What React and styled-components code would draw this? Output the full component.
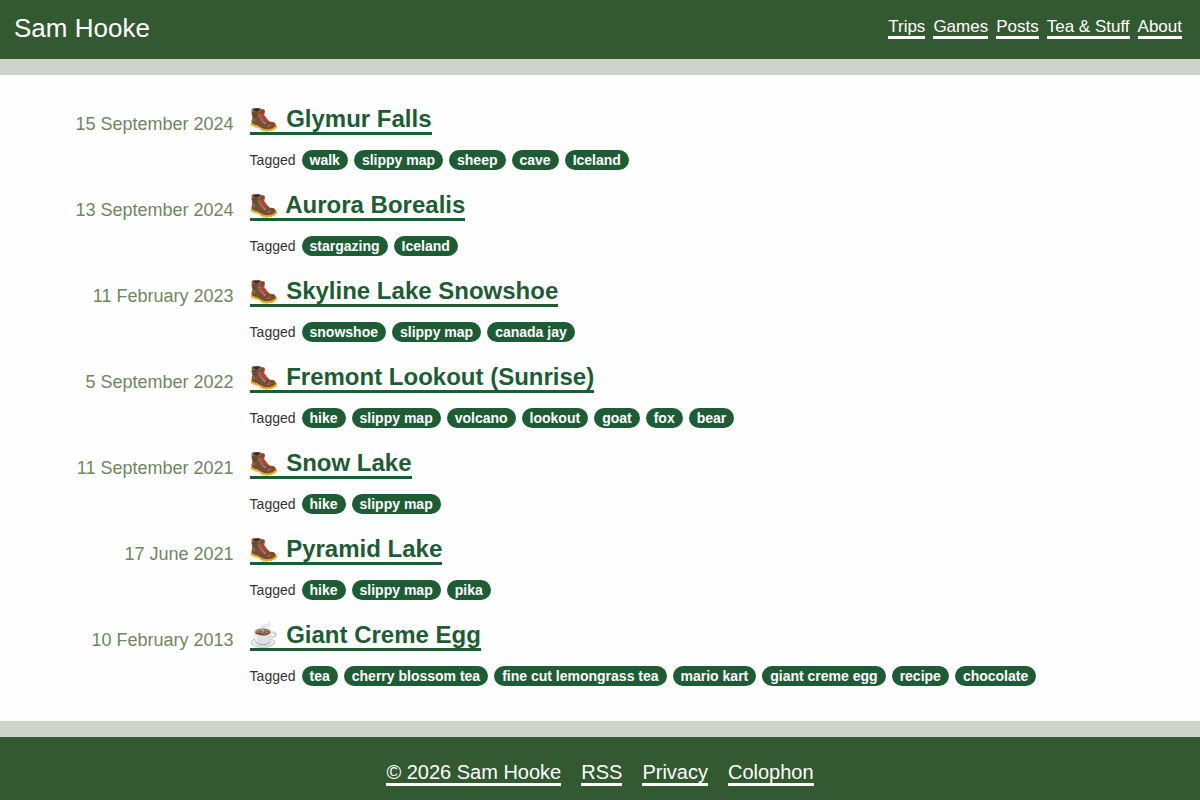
import React from "react";
import styled, { createGlobalStyle, css } from "styled-components";

const GlobalStyle = createGlobalStyle`
  *, *::before, *::after { box-sizing: border-box; }
  body {
    margin: 0;
    background: #fefefe;
    color: #333;
    font-family: "Liberation Sans", Arial, "Noto Color Emoji", sans-serif;
  }
`;

const Page = styled.div`
  display: flex;
  flex-direction: column;
  min-height: 100vh;
`;

const Header = styled.header`
  display: flex;
  align-items: flex-start;
  justify-content: space-between;
  padding: 13px 18px 16px 14px;
  background: #335930;
  border-bottom: 16px solid #ced4c8;
  background-clip: padding-box;
`;

const Brand = styled.a`
  color: #fff;
  font-size: 26px;
  line-height: 30px;
  text-decoration: none;
`;

const Nav = styled.nav`
  display: flex;
  gap: 8px;
  padding-top: 4px;
`;

const underlined = css`
  color: #fff;
  text-decoration: none;
  border-bottom: 3px solid #fff;
`;

const NavLink = styled.a`
  ${underlined}
  font-size: 17px;
  line-height: 19px;
`;

const Main = styled.main`
  flex: 1;
  padding: 30px 16px 35px;
`;

const PostList = styled.ul`
  display: flex;
  flex-direction: column;
  gap: 21px;
  margin: 0;
  padding: 0;
  list-style: none;
`;

const PostRow = styled.li`
  display: grid;
  grid-template-columns: 20% 80%;
`;

const PostDate = styled.time`
  padding: 8px 16px 0 0;
  color: #6f8760;
  font-size: 18px;
  line-height: 22px;
  text-align: right;
`;

const PostTitle = styled.h2`
  display: flex;
  margin: 0 0 15px;
  font-size: 24px;
  line-height: 27px;
`;

const TitleLink = styled.a`
  color: #1e5c36;
  text-decoration: none;
  border-bottom: 3px solid #1e5c36;
`;

const Tags = styled.div`
  display: flex;
  flex-wrap: wrap;
  gap: 6px;
  font-size: 14px;
  line-height: 20px;
`;

const Tag = styled.a`
  padding: 0 8px;
  border-radius: 10px;
  background: #1e5c36;
  color: #fff;
  font-weight: bold;
  text-decoration: none;
`;

const Footer = styled.footer`
  display: flex;
  flex-wrap: wrap;
  justify-content: center;
  gap: 20px;
  padding: 24px 16px 14px;
  background: #335930;
  border-top: 16px solid #ced4c8;
  background-clip: padding-box;
`;

const FooterLink = styled.a`
  ${underlined}
  font-size: 20px;
  line-height: 22px;
`;

const navItems = ["Trips", "Games", "Posts", "Tea & Stuff", "About"];
const footerItems = ["© 2026 Sam Hooke", "RSS", "Privacy", "Colophon"];

const posts = [
  { date: "15 September 2024", iso: "2024-09-15", icon: "🥾", title: "Glymur Falls", tags: ["walk", "slippy map", "sheep", "cave", "Iceland"] },
  { date: "13 September 2024", iso: "2024-09-13", icon: "🥾", title: "Aurora Borealis", tags: ["stargazing", "Iceland"] },
  { date: "11 February 2023", iso: "2023-02-11", icon: "🥾", title: "Skyline Lake Snowshoe", tags: ["snowshoe", "slippy map", "canada jay"] },
  { date: "5 September 2022", iso: "2022-09-05", icon: "🥾", title: "Fremont Lookout (Sunrise)", tags: ["hike", "slippy map", "volcano", "lookout", "goat", "fox", "bear"] },
  { date: "11 September 2021", iso: "2021-09-11", icon: "🥾", title: "Snow Lake", tags: ["hike", "slippy map"] },
  { date: "17 June 2021", iso: "2021-06-17", icon: "🥾", title: "Pyramid Lake", tags: ["hike", "slippy map", "pika"] },
  { date: "10 February 2013", iso: "2013-02-10", icon: "☕", title: "Giant Creme Egg", tags: ["tea", "cherry blossom tea", "fine cut lemongrass tea", "mario kart", "giant creme egg", "recipe", "chocolate"] },
];

export default function App() {
  return (
    <Page>
      <GlobalStyle />
      <Header>
        <Brand href="#">Sam Hooke</Brand>
        <Nav>
          {navItems.map((item) => (
            <NavLink key={item} href="#">{item}</NavLink>
          ))}
        </Nav>
      </Header>
      <Main>
        <PostList>
          {posts.map((post) => (
            <PostRow key={post.iso}>
              <PostDate dateTime={post.iso}>{post.date}</PostDate>
              <article>
                <PostTitle>
                  <TitleLink href="#">{post.icon} {post.title}</TitleLink>
                </PostTitle>
                <Tags>
                  <span>Tagged</span>
                  {post.tags.map((tag) => (
                    <Tag key={tag} href="#">{tag}</Tag>
                  ))}
                </Tags>
              </article>
            </PostRow>
          ))}
        </PostList>
      </Main>
      <Footer>
        {footerItems.map((item) => (
          <FooterLink key={item} href="#">{item}</FooterLink>
        ))}
      </Footer>
    </Page>
  );
}
